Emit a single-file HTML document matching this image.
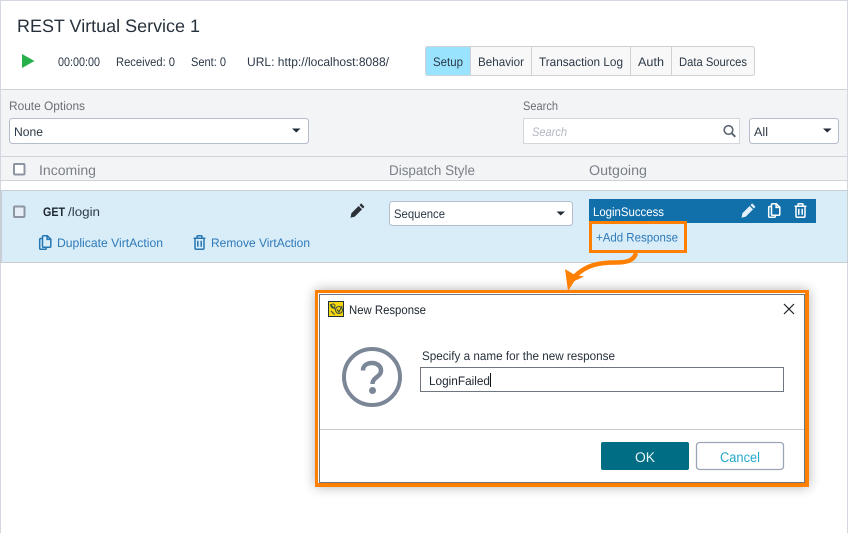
<!DOCTYPE html>
<html>
<head>
<meta charset="utf-8">
<style>
html,body{margin:0;padding:0;background:#fff;width:848px;height:533px;overflow:hidden}
svg{display:block}
text{font-family:"Liberation Sans",sans-serif;font-size:12.3px;fill:#2d3a48;white-space:pre;text-rendering:geometricPrecision}
.lab{fill:#6b6f76}
.hd{font-size:14px;fill:#7a7f87}
.lnk{fill:#2f7ab8}
</style>
</head>
<body>
<svg width="848" height="533" viewBox="0 0 848 533" xmlns="http://www.w3.org/2000/svg">
<defs>
<filter id="sh" x="-10%" y="-15%" width="120%" height="130%"><feGaussianBlur stdDeviation="6"/></filter>
<g id="tr"><path d="M.6 3.2H12.4M4 3V1.6Q4 .7 4.9 .7H8.1Q9 .7 9 1.6V3M2 3.2V13Q2 14.2 3.2 14.2H9.8Q11 14.2 11 13V3.2M4.8 5.8V11.8M8.2 5.8V11.8" fill="none" stroke-width="1.500"/></g>
<g id="cp"><path d="M3.500 3.500H1.700Q.7 3.500 .7 4.500V13.300Q.7 14.300 1.700 14.300H6.300Q7.300 14.300 7.300 13.300V12.300M3.500 1.700Q3.500 .7 4.500 .7H8.300L11.800 4.200V11.300Q11.800 12.300 10.800 12.300H4.500Q3.500 12.300 3.500 11.300ZM8.100 .9V4.400H11.600" fill="none" stroke-width="1.500"/></g>
<path id="pn" d="M11.2.4 14 3.2Q14.6 3.8 14 4.4L12.9 5.5 9.5 2.1 10.6 1Q10.9 .1 11.2.4ZM8.6 3 12 6.4 4.8 13.6 .5 14.8 1.4 10.2Z"/>
</defs>

<!-- frame -->
<rect x="0" y="0" width="848" height="533" fill="#fff"/>
<rect x="0" y="0" width="848" height="1" fill="#d3d8e0"/>
<rect x="0" y="0" width="1" height="533" fill="#d3d8e0"/>
<rect x="847" y="0" width="1" height="533" fill="#d3d8e0"/>

<!-- header -->
<text x="17" y="32" style="font-size:18px;fill:#27313c" textLength="183" lengthAdjust="spacingAndGlyphs">REST Virtual Service 1</text>
<path d="M22 54 34.500 61 22 68Z" fill="#27b04b"/>
<text x="58" y="66" textLength="42" lengthAdjust="spacingAndGlyphs">00:00:00</text>
<text x="116" y="66" textLength="59" lengthAdjust="spacingAndGlyphs">Received: 0</text>
<text x="191" y="66" textLength="35" lengthAdjust="spacingAndGlyphs">Sent: 0</text>
<text x="247" y="66" textLength="142" lengthAdjust="spacingAndGlyphs">URL: http://localhost:8088/</text>

<!-- tabs -->
<rect x="425.500" y="46.500" width="329" height="29" rx="2" fill="#f8f8f8" stroke="#cfd1d4"/>
<path d="M427 47H470V75H427Q426 75 426 74V48Q426 47 427 47Z" fill="#99e3ff"/>
<path d="M470.500 47V75M531.500 47V75M630.500 47V75M671.500 47V75" stroke="#cfd1d4"/>
<text x="433" y="66" textLength="30" lengthAdjust="spacingAndGlyphs">Setup</text>
<text x="478" y="66" textLength="46" lengthAdjust="spacingAndGlyphs">Behavior</text>
<text x="539" y="66" textLength="84" lengthAdjust="spacingAndGlyphs">Transaction Log</text>
<text x="638" y="66" textLength="26" lengthAdjust="spacingAndGlyphs">Auth</text>
<text x="679" y="66" textLength="68" lengthAdjust="spacingAndGlyphs">Data Sources</text>

<!-- filter band -->
<rect x="1" y="89" width="846" height="92" fill="#f3f4f6"/>
<rect x="1" y="89" width="846" height="1" fill="#cfd2d7"/>
<rect x="1" y="156" width="846" height="1" fill="#cfd2d7"/>
<rect x="1" y="180" width="846" height="1" fill="#cfd2d7"/>

<text class="lab" x="9" y="110" textLength="76" lengthAdjust="spacingAndGlyphs">Route Options</text>
<rect x="9.500" y="118.500" width="299" height="25" rx="3" fill="#fff" stroke="#b5bccb"/>
<text x="14" y="136" textLength="29" lengthAdjust="spacingAndGlyphs">None</text>
<path d="M292 128.500H300.500L296.250 132.500Z" fill="#222b36"/>

<text class="lab" x="523" y="110" textLength="35" lengthAdjust="spacingAndGlyphs">Search</text>
<rect x="523.500" y="118.500" width="216" height="25" fill="#fff" stroke="#d3d6db"/>
<text x="532" y="136" style="font-style:italic;fill:#b3b8c2" textLength="35" lengthAdjust="spacingAndGlyphs">Search</text>
<circle cx="728.500" cy="130" r="4.300" fill="none" stroke="#5c6570" stroke-width="1.600"/>
<path d="M731.700 133.200 735.300 136.800" stroke="#5c6570" stroke-width="2"/>
<rect x="749.500" y="118.500" width="89" height="25" rx="3" fill="#fff" stroke="#b5bccb"/>
<text x="754" y="136" textLength="14" lengthAdjust="spacingAndGlyphs">All</text>
<path d="M823 128.500H831.500L827.250 132.500Z" fill="#222b36"/>

<!-- table head -->
<rect x="14" y="164" width="10.500" height="10.500" rx="1" fill="#fff" stroke="#8d95a3" stroke-width="2"/>
<text class="hd" x="39" y="175" textLength="57" lengthAdjust="spacingAndGlyphs">Incoming</text>
<text class="hd" x="389" y="175" textLength="86" lengthAdjust="spacingAndGlyphs">Dispatch Style</text>
<text class="hd" x="589" y="175" textLength="58" lengthAdjust="spacingAndGlyphs">Outgoing</text>

<!-- row -->
<rect x="0" y="190" width="848" height="73" fill="#c9ced5"/>
<rect x="2" y="191" width="845" height="71" fill="#d9edf9"/>
<rect x="14" y="206.500" width="10.500" height="10.500" rx="1" fill="#e6eef5" stroke="#8d95a3" stroke-width="2"/>
<text x="43" y="216" style="font-weight:bold;fill:#1e2630" textLength="22" lengthAdjust="spacingAndGlyphs">GET</text>
<text x="68" y="216" textLength="32" lengthAdjust="spacingAndGlyphs">/login</text>
<use href="#pn" x="350" y="203" fill="#2b2f36"/>
<use href="#cp" x="39" y="235" stroke="#2576b3"/>
<text class="lnk" x="57" y="247" textLength="106" lengthAdjust="spacingAndGlyphs">Duplicate VirtAction</text>
<use href="#tr" x="193" y="235" stroke="#2576b3"/>
<text class="lnk" x="211" y="247" textLength="99" lengthAdjust="spacingAndGlyphs">Remove VirtAction</text>

<rect x="389.500" y="201.500" width="183" height="24" rx="3" fill="#fff" stroke="#b5bccb"/>
<text x="394" y="218" textLength="51" lengthAdjust="spacingAndGlyphs">Sequence</text>
<path d="M556.500 211.500H565L560.750 215.500Z" fill="#222b36"/>

<rect x="589" y="199" width="227" height="24" fill="#1170aa"/>
<text x="593" y="216" style="fill:#fff" textLength="71" lengthAdjust="spacingAndGlyphs">LoginSuccess</text>
<use href="#pn" x="741" y="203" fill="#e4f1fa"/>
<use href="#cp" x="768" y="203" stroke="#fff"/>
<use href="#tr" x="794" y="203" stroke="#fff"/>

<!-- highlight + arrow -->
<rect x="590.500" y="222.500" width="95" height="29" fill="none" stroke="#ff8000" stroke-width="3"/>
<text class="lnk" x="596" y="241.500" textLength="82" lengthAdjust="spacingAndGlyphs">+Add Response</text>

<!-- dialog -->
<rect x="315" y="290" width="494" height="197" fill="#000" opacity=".3" filter="url(#sh)"/>
<path d="M636 253C634 260 628 262.500 616 262.500C598 262.500 586 265 574 277" fill="none" stroke="#ff8000" stroke-width="4.500"/>
<path d="M565 269 574 274.500 584 276.500 574.500 281 568 291Z" fill="#ff8000"/>
<rect x="315" y="290" width="494" height="197" fill="#ff8000"/>
<rect x="318" y="293" width="487" height="190" fill="#fff"/>
<rect x="319.500" y="294.500" width="485" height="188" fill="#fff" stroke="#6f7680"/>

<rect x="328.500" y="301.500" width="15" height="15" fill="#f6d70d" stroke="#20303a"/>
<path d="M330 304.500 335 309M331 311 334.500 314.500M337 309.500 339 312 342 306" fill="none" stroke="#3c4d3c" stroke-width="1.200"/>
<circle cx="339" cy="310" r="3.500" fill="none" stroke="#3c4d3c"/>
<circle cx="333" cy="306" r="2" fill="none" stroke="#3c4d3c"/>
<text x="349" y="314" style="fill:#1e2630" textLength="77" lengthAdjust="spacingAndGlyphs">New Response</text>
<path d="M784 304 794 314M794 304 784 314" stroke="#1c2024" stroke-width="1.200"/>

<circle cx="372" cy="377" r="28" fill="none" stroke="#7b8797" stroke-width="4"/>
<path d="M363 370.500C363 365.500 367 363 372 363C377.500 363 381 366.500 381 370.500C381 377 372.500 377 372.500 384" fill="none" stroke="#7b8797" stroke-width="4.500"/>
<circle cx="372.500" cy="390.500" r="3.500" fill="#7b8797"/>

<text x="422" y="360" style="fill:#27313c" textLength="193" lengthAdjust="spacingAndGlyphs">Specify a name for the new response</text>
<rect x="420.500" y="367.500" width="363" height="24" fill="#fff" stroke="#6f7680"/>
<text x="429" y="385" style="fill:#1e2630" textLength="61" lengthAdjust="spacingAndGlyphs">LoginFailed</text>
<rect x="490" y="373" width="1" height="14" fill="#111"/>

<rect x="320" y="429" width="484" height="1" fill="#cccdd0"/>
<rect x="601" y="442" width="88" height="28" rx="2" fill="#006d85"/>
<text x="635" y="462" style="font-size:14px;fill:#e6f3f6" textLength="20" lengthAdjust="spacingAndGlyphs">OK</text>
<rect x="696.500" y="442.500" width="87" height="27" rx="3" fill="#fff" stroke="#9aa5b5" stroke-width="1.300"/>
<text x="720" y="462" style="font-size:14px;fill:#22a9c9" textLength="40" lengthAdjust="spacingAndGlyphs">Cancel</text>
</svg>
</body>
</html>
